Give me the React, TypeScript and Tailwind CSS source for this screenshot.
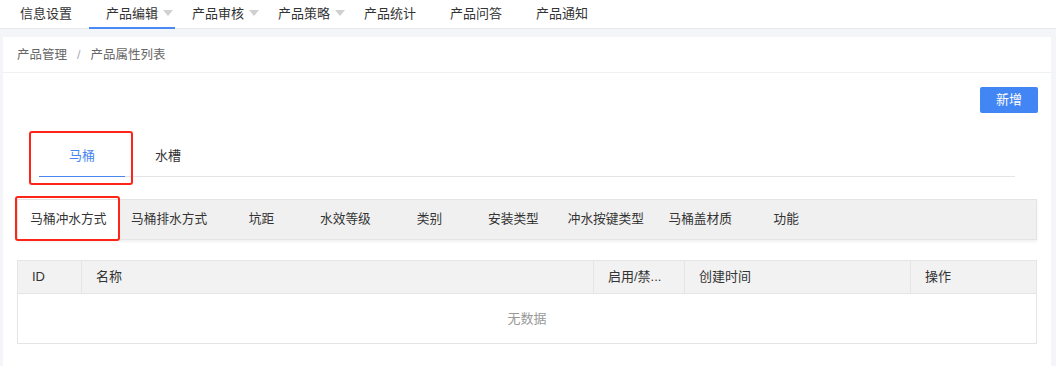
import React from "react";

const navItems: { label: string; arrow?: boolean; active?: boolean }[] = [
  { label: "信息设置" },
  { label: "产品编辑", arrow: true, active: true },
  { label: "产品审核", arrow: true },
  { label: "产品策略", arrow: true },
  { label: "产品统计" },
  { label: "产品问答" },
  { label: "产品通知" },
];

const subTabs = [
  "马桶冲水方式",
  "马桶排水方式",
  "坑距",
  "水效等级",
  "类别",
  "安装类型",
  "冲水按键类型",
  "马桶盖材质",
  "功能",
];

export default function App() {
  return (
    <div
      className="w-[1056px] h-[366px] overflow-hidden bg-[#f4f5f9] text-[13px] text-[#333]"
      style={{ fontFamily: '"Liberation Sans", "Noto Sans CJK SC", sans-serif' }}
    >
      {/* Top nav */}
      <div className="h-[29px] bg-white border-b border-[#e6e8ee] flex pl-[3px]">
        {navItems.map((n) => (
          <div
            key={n.label}
            className="relative h-full flex items-center px-[17px] text-[#333]"
          >
            <span>{n.label}</span>
            {n.arrow && (
              <span className="absolute right-[2px] top-[10px] w-0 h-0 border-l-[5px] border-r-[5px] border-t-[6px] border-l-transparent border-r-transparent border-t-[#d0d0d0]" />
            )}
            {n.active && (
              <span className="absolute left-0 right-0 bottom-[-1px] h-[2px] bg-[#4a8af4]" />
            )}
          </div>
        ))}
      </div>

      {/* Card */}
      <div className="ml-[3px] mt-[8px] w-[1048px] h-[400px] bg-white">
        <div className="h-[36px] border-b border-[#eef0f4] flex items-center pl-[14px] pt-[1px] text-[#666] text-[12.5px]">
          <span>产品管理</span>
          <span className="mx-[10px] text-[#aaa]">/</span>
          <span>产品属性列表</span>
        </div>

        <div className="px-[14px] pt-[14px]">
          <div className="flex justify-end">
            <button className="w-[58px] h-[26px] rounded-[2px] bg-[#4285f4] text-white text-[13px] mr-[-1px]">
              新增
            </button>
          </div>

          {/* Main tabs */}
          <div className="mx-[22px] mt-[23px] h-[41px] border-b border-[#e5e5e5] flex">
            <div className="relative w-[86px] h-full flex items-center justify-center text-[#4a86f0]">
              马桶
              <span className="absolute left-0 right-0 bottom-[-1px] h-[1.5px] bg-[#4a86f0]" />
              <span className="absolute left-[-10px] right-[-8px] top-[-5px] bottom-[-9px] border-2 border-[#ff2418] rounded-[3px]" />
            </div>
            <div className="w-[86px] h-full flex items-center justify-center text-[#333]">水槽</div>
          </div>

          {/* Sub tabs bar */}
          <div className="mt-[22px] h-[41px] bg-[#f0f0f0] border border-[#e4e4e4] shadow-[0_2px_3px_rgba(0,0,0,0.06)] flex text-[12.7px]">
            {subTabs.map((t, i) => (
              <div
                key={t}
                className={`relative h-full min-w-[84px] px-[12.3px] flex items-center justify-center ${i === 0 ? "bg-white" : ""}`}
              >
                {t}
                {i === 0 && (
                  <span className="absolute left-[-3px] right-[-1px] top-[-4px] bottom-[-2px] border-2 border-[#ff2418] rounded-[3px]" />
                )}
              </div>
            ))}
          </div>

          {/* Table */}
          <div className="mt-[20px] border border-[#e5e5e5]">
            <div className="flex h-[33px] bg-[#f2f2f2] border-b border-[#e5e5e5]">
              <div className="w-[64px] pl-[14px] flex items-center border-r border-[#e5e5e5]">ID</div>
              <div className="w-[512px] pl-[14px] flex items-center border-r border-[#e5e5e5]">名称</div>
              <div className="w-[91px] pl-[14px] flex items-center border-r border-[#e5e5e5]">启用/禁...</div>
              <div className="w-[226px] pl-[14px] flex items-center border-r border-[#e5e5e5]">创建时间</div>
              <div className="flex-1 pl-[14px] flex items-center">操作</div>
            </div>
            <div className="h-[49px] flex items-center justify-center text-[#999]">无数据</div>
          </div>
        </div>
      </div>
    </div>
  );
}
